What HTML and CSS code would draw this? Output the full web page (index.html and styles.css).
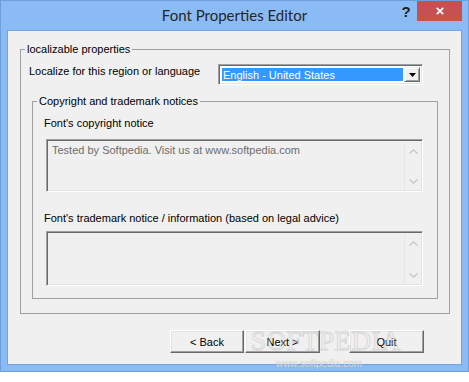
FILE: index.html
```html
<!DOCTYPE html>
<html>
<head>
<meta charset="utf-8">
<link rel="stylesheet" href="styles.css">
</head>
<body>
<div class="window">
  <div class="titlebar">
    <div></div>
    <div class="title">Font Properties Editor</div>
    <div class="caption">
      <span class="help">?</span>
      <span class="close"><svg width="8" height="8" viewBox="0 0 8 8"><path d="M0.8 0.8 L7.2 7.2 M7.2 0.8 L0.8 7.2" stroke="#fff" stroke-width="1.7" fill="none"/></svg></span>
    </div>
  </div>
  <div class="client">
    <fieldset class="group outer">
      <legend>localizable properties</legend>
      <div class="row">
        <span class="row-label">Localize for this region or language</span>
        <div class="combo">
          <span class="combo-value">English - United States</span>
          <span class="combo-btn"><svg width="7" height="4" viewBox="0 0 7 4"><path d="M0 0 H7 L3.5 4 Z" fill="#000"/></svg></span>
        </div>
      </div>
      <fieldset class="group inner">
        <legend>Copyright and trademark notices</legend>
        <div class="label label-first">Font's copyright notice</div>
        <div class="memo memo-first">
          <div class="memo-text">Tested by Softpedia. Visit us at www.softpedia.com</div>
          <div class="scroll">
            <svg width="9" height="5" viewBox="0 0 9 5"><path d="M0.5 4.5 L4.5 0.8 L8.5 4.5" stroke="#c6c6c6" stroke-width="1.3" fill="none"/></svg>
            <svg width="9" height="5" viewBox="0 0 9 5"><path d="M0.5 0.5 L4.5 4.2 L8.5 0.5" stroke="#c6c6c6" stroke-width="1.3" fill="none"/></svg>
          </div>
        </div>
        <div class="label label-second">Font's trademark notice / information (based on legal advice)</div>
        <div class="memo memo-second">
          <div class="memo-text"></div>
          <div class="scroll">
            <svg width="9" height="5" viewBox="0 0 9 5"><path d="M0.5 4.5 L4.5 0.8 L8.5 4.5" stroke="#c6c6c6" stroke-width="1.3" fill="none"/></svg>
            <svg width="9" height="5" viewBox="0 0 9 5"><path d="M0.5 0.5 L4.5 4.2 L8.5 0.5" stroke="#c6c6c6" stroke-width="1.3" fill="none"/></svg>
          </div>
        </div>
      </fieldset>
    </fieldset>
    <div class="buttons">
      <button class="btn btn-back">&lt; Back</button>
      <button class="btn btn-next">Next &gt;</button>
      <button class="btn btn-quit">Quit</button>
    </div>
  </div>
  <div class="watermark">
    <div class="wm-big">SOFTPEDIA</div>
    <div class="wm-small">www.softpedia.com</div>
  </div>
</div>
</body>
</html>
```
FILE: styles.css
```css
html, body {
  margin: 0;
  padding: 0;
  background: #ffffff;
}
body {
  font-family: "Liberation Sans", Arial, sans-serif;
  font-size: 11px;
  color: #000;
}
.window {
  position: relative;
  width: 469px;
  height: 372px;
  box-sizing: border-box;
  border: 1px solid #6f9edb;
  background: #8bbbf5;
  padding: 0 6px 6px 6px;
  display: flex;
  flex-direction: column;
}
.titlebar {
  height: 29px;
  display: grid;
  grid-template-columns: 1fr auto 1fr;
  flex: none;
}
.title {
  font-family: Lato, "Open Sans", sans-serif;
  font-size: 15px;
  color: #262626;
  line-height: 29px;
  white-space: nowrap;
}
.caption {
  justify-self: end;
  display: flex;
  align-items: flex-start;
}
.help {
  width: 22px;
  text-align: center;
  font-family: "Liberation Sans", Arial, sans-serif;
  font-weight: bold;
  font-size: 15px;
  line-height: 20px;
  color: #1e1e1e;
  margin-top: 1px;
}
.close {
  width: 45px;
  height: 20px;
  background: #c75050;
  display: flex;
  align-items: center;
  justify-content: center;
}
.client {
  flex: 1;
  border: 1px solid #74a4df;
  background: #f0f0f0;
  padding: 12px 11px 0 12px;
  display: flex;
  flex-direction: column;
}
fieldset.group {
  margin: 0;
  padding: 0;
  border: 1px solid #a0a0a0;
  min-width: 0;
}
fieldset.group > legend {
  margin-left: 4px;
  padding: 0 2px;
  line-height: 13px;
  font-size: 11px;
}
.row {
  margin-top: 8px;
  padding-left: 8px;
  padding-right: 26px;
  display: flex;
  justify-content: space-between;
  align-items: flex-start;
}
.row-label {
  line-height: 13px;
  margin-top: 1px;
}
.combo {
  width: 205px;
  height: 21px;
  box-sizing: border-box;
  border: 1px solid;
  border-color: #a0a0a0 #ffffff #ffffff #a0a0a0;
  box-shadow: inset 1px 1px 0 #696969, inset -1px -1px 0 #e3e3e3;
  background: #fff;
  padding: 2px 2px 2px 2px;
  display: flex;
}
.combo-value {
  flex: 1;
  margin: 1px 1px 1px 1px;
  background: #3399ff;
  color: #fff;
  line-height: 15px;
  padding-left: 1px;
}
.combo-btn {
  width: 16px;
  box-sizing: border-box;
  background: #f0f0f0;
  border: 1px solid;
  border-color: #f0f0f0 #696969 #696969 #f0f0f0;
  box-shadow: inset 1px 1px 0 #fff, inset -1px -1px 0 #a0a0a0;
  display: flex;
  align-items: center;
  justify-content: center;
}
fieldset.inner {
  margin: 10px 11px 14px 11px;
  padding: 0 0 12px 0;
}
.label {
  line-height: 13px;
  padding-left: 11px;
}
.label-first {
  margin-top: 9px;
}
.label-second {
  margin-top: 20px;
}
.memo {
  margin: 9px 14px 0 13px;
  box-sizing: border-box;
  border: 1px solid;
  border-color: #a0a0a0 #ffffff #ffffff #a0a0a0;
  box-shadow: inset 1px 1px 0 #696969, inset -1px -1px 0 #e3e3e3;
  background: #f0f0f0;
  padding: 2px 1px 1px 2px;
  display: flex;
}
.memo-first {
  height: 53px;
}
.memo-second {
  margin-top: 6px;
  height: 55px;
}
.memo-text {
  flex: 1;
  color: #6d6d6d;
  line-height: 13px;
  padding: 2px 3px;
}
.scroll {
  width: 17px;
  box-sizing: border-box;
  border-left: 1px solid #e6e6e6;
  display: flex;
  flex-direction: column;
  align-items: center;
  justify-content: space-between;
  padding: 7px 0 6px 0;
}
.buttons {
  margin-top: 16px;
  padding-right: 26px;
  display: flex;
  justify-content: flex-end;
}
.btn {
  height: 23px;
  width: 75px;
  box-sizing: border-box;
  border: 1px solid;
  border-color: #ffffff #696969 #696969 #ffffff;
  box-shadow: inset -1px -1px 0 #a0a0a0, inset 1px 1px 0 #e3e3e3;
  background: #f0f0f0;
  font-family: "Liberation Sans", Arial, sans-serif;
  font-size: 11px;
  color: #000;
  padding: 0;
  margin: 0;
}
.btn-back {
  width: 74px;
  margin-right: 1px;
}
.btn-next {
  margin-right: 29px;
}
.watermark {
  position: absolute;
  left: 250px;
  top: 326px;
  width: 136px;
  pointer-events: none;
  text-align: center;
}
.wm-big {
  font-family: "Liberation Serif", serif;
  font-size: 27px;
  letter-spacing: 0.5px;
  line-height: 28px;
  color: rgba(255, 255, 255, 0.2);
  -webkit-text-stroke: 1px rgba(175, 175, 175, 0.4);
}
.wm-small {
  font-family: "Liberation Sans", Arial, sans-serif;
  font-size: 10px;
  line-height: 12px;
  margin-top: 3px;
  color: rgba(238, 238, 238, 0.75);
  text-shadow: 0 0 1px rgba(140, 140, 140, 0.5);
}
```
